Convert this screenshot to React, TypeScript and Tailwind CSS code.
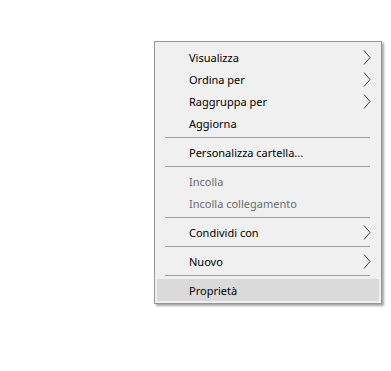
import React from "react";

type Item =
  | { type: "item"; label: string; sub?: boolean; disabled?: boolean; active?: boolean }
  | { type: "sep" };

const items: Item[] = [
  { type: "item", label: "Visualizza", sub: true },
  { type: "item", label: "Ordina per", sub: true },
  { type: "item", label: "Raggruppa per", sub: true },
  { type: "item", label: "Aggiorna" },
  { type: "sep" },
  { type: "item", label: "Personalizza cartella..." },
  { type: "sep" },
  { type: "item", label: "Incolla", disabled: true },
  { type: "item", label: "Incolla collegamento", disabled: true },
  { type: "sep" },
  { type: "item", label: "Condividi con", sub: true },
  { type: "sep" },
  { type: "item", label: "Nuovo", sub: true },
  { type: "sep" },
  { type: "item", label: "Proprietà", active: true },
];

const Chevron = () => (
  <svg width="8" height="15" viewBox="0 0 8 15" fill="none" stroke="#3c3c3c" strokeWidth="1">
    <path d="M1 0.5 L7 7.5 L1 14.5" />
  </svg>
);

const App = () => {
  return (
    <div className="w-[391px] h-[371px] bg-white pt-[41px] pl-[154px] font-['Segoe_UI','Noto_Sans',sans-serif]">
      <div className="w-[228px] bg-[#f0f0f0] border border-[#979797] pt-[4px] pb-[2px] px-[2px] shadow-[2px_2px_2px_rgba(0,0,0,0.35)]">
        {items.map((it, i) =>
          it.type === "sep" ? (
            <div key={i} className="h-[7px] flex items-center pl-[8px] pr-[9px]">
              <div className="h-px w-full bg-[#a0a0a0]" />
            </div>
          ) : (
            <div
              key={i}
              className={`h-[22px] flex items-center pl-[32px] pr-[8px] text-[11px] ${
                it.active ? "bg-[#dadada]" : ""
              } ${it.disabled ? "text-[#6d6d6d]" : "text-black"}`}
            >
              <span className="flex-1 pt-[2px]">{it.label}</span>
              {it.sub && <Chevron />}
            </div>
          )
        )}
      </div>
    </div>
  );
};

export default App;
